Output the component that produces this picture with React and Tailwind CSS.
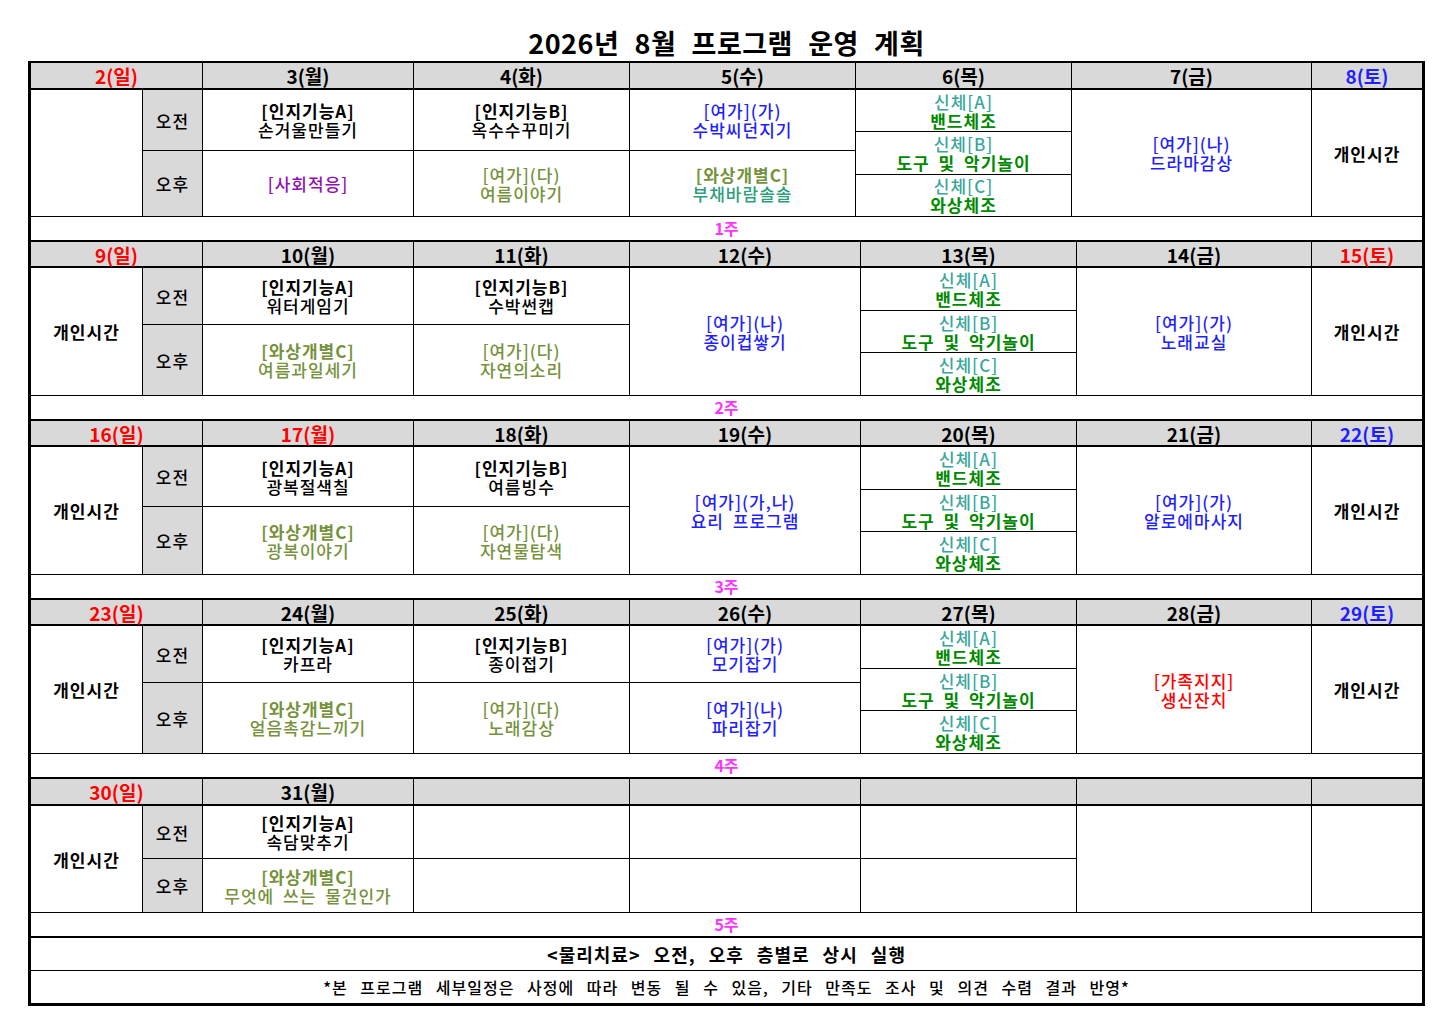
import React from 'react';

const K = 'text-black';
const BL = 'text-[#1f1fff]';
const OL = 'text-[#76923c]';
const TL = 'text-[#2e9e7c]';
const SC = 'text-[#3aa79c]';
const GR = 'text-[#008a00]';
const PU = 'text-[#9010b0]';
const RD = 'text-[#ff0000]';

// one program cell: lines = [text, colour, bold]
const Prog = ({ lines = [], span, last }) => (
  <div
    className={`flex flex-col items-center justify-center border-b border-black text-center ${last ? '' : 'border-r'} ${span ? 'row-span-2' : ''}`}
  >
    {lines.map(([t, c, b], i) => (
      <div key={i} className={`${c} ${b ? 'font-bold' : 'font-medium'}`}>{t}</div>
    ))}
  </div>
);

const Head = ({ t, c = K, wide, last }) => (
  <div
    className={`flex items-center justify-center border-b-2 border-black bg-[#d9d9d9] text-[19px] font-bold tracking-normal ${c} ${wide ? 'col-span-2' : ''} ${last ? '' : 'border-r'}`}
  >
    {t}
  </div>
);

const Slot = ({ t }) => (
  <div className="flex items-center justify-center border-r border-b border-black bg-[#d9d9d9] font-medium">{t}</div>
);

const Body = () => (
  <div className="row-span-2 flex flex-col border-r border-b border-black">
    {[['A', '밴드체조'], ['B', '도구 및 악기놀이'], ['C', '와상체조']].map(([k, v], i) => (
      <div key={k} className={`flex flex-1 flex-col items-center justify-center text-center ${i < 2 ? 'border-b border-black' : ''}`}>
        <div className={`${SC} font-medium`}>신체[{k}]</div>
        <div className={`${GR} font-bold`}>{v}</div>
      </div>
    ))}
  </div>
);

const Free = ({ last }) => <Prog span last={last} lines={[['개인시간', K, true]]} />;

const Week = ({ n, cols, rows, children }) => (
  <>
    <div className={`grid border-t-2 border-black ${cols} ${rows}`}>{children}</div>
    <div className="flex h-[23px] items-center justify-center text-[16px] font-bold tracking-normal text-[#ff33ff]">{n}주</div>
  </>
);

const A = (t) => [['[인지기능A]', K, true], [t, K]];
const B = (t) => [['[인지기능B]', K, true], [t, K]];
const C = (t) => [['[와상개별C]', OL, true], [t, OL]];
const D = (t) => [['[여가](다)', OL], [t, OL]];
const Y = (g, t) => [[`[여가](${g})`, BL], [t, BL]];

const COLS1 = 'grid-cols-[112px_60px_211px_216px_226px_216px_240px_110px]';
const COLS = 'grid-cols-[112px_60px_211px_216px_231px_216px_235px_110px]';

export default function App() {
  return (
    <div className="min-h-screen bg-white font-['Noto_Sans_CJK_KR',sans-serif] text-black">
      <h1 className="ml-[28px] w-[1397px] pt-[24px] text-center text-[27px] font-bold leading-[37px] tracking-[0.5px] whitespace-pre [word-spacing:1px]">
        2026년  8월  프로그램  운영  계획
      </h1>
      <div className="ml-[28px] w-[1397px] border-x-[3px] border-b-[3px] border-black text-[17px] leading-[19px] tracking-[1px] [word-spacing:4px]">
        <Week n={1} cols={COLS1} rows="grid-rows-[27px_61px_66px]">
          <Head t="2(일)" c={RD} wide />
          <Head t="3(월)" />
          <Head t="4(화)" />
          <Head t="5(수)" />
          <Head t="6(목)" />
          <Head t="7(금)" />
          <Head t="8(토)" c={BL} last />
          <Prog span />
          <Slot t="오전" />
          <Prog lines={A('손거울만들기')} />
          <Prog lines={B('옥수수꾸미기')} />
          <Prog lines={Y('가', '수박씨던지기')} />
          <Body />
          <Prog span lines={Y('나', '드라마감상')} />
          <Free last />
          <Slot t="오후" />
          <Prog lines={[['[사회적응]', PU]]} />
          <Prog lines={D('여름이야기')} />
          <Prog lines={[['[와상개별C]', OL, true], ['부채바람솔솔', TL]]} />
        </Week>

        <Week n={2} cols={COLS} rows="grid-rows-[26px_57px_71px]">
          <Head t="9(일)" c={RD} wide />
          <Head t="10(월)" />
          <Head t="11(화)" />
          <Head t="12(수)" />
          <Head t="13(목)" />
          <Head t="14(금)" />
          <Head t="15(토)" c={RD} last />
          <Free />
          <Slot t="오전" />
          <Prog lines={A('워터게임기')} />
          <Prog lines={B('수박썬캡')} />
          <Prog span lines={Y('나', '종이컵쌓기')} />
          <Body />
          <Prog span lines={Y('가', '노래교실')} />
          <Free last />
          <Slot t="오후" />
          <Prog lines={C('여름과일세기')} />
          <Prog lines={D('자연의소리')} />
        </Week>

        <Week n={3} cols={COLS} rows="grid-rows-[26px_60px_68px]">
          <Head t="16(일)" c={RD} wide />
          <Head t="17(월)" c={RD} />
          <Head t="18(화)" />
          <Head t="19(수)" />
          <Head t="20(목)" />
          <Head t="21(금)" />
          <Head t="22(토)" c={BL} last />
          <Free />
          <Slot t="오전" />
          <Prog lines={A('광복절색칠')} />
          <Prog lines={B('여름빙수')} />
          <Prog span lines={Y('가,나', '요리 프로그램')} />
          <Body />
          <Prog span lines={Y('가', '알로에마사지')} />
          <Free last />
          <Slot t="오후" />
          <Prog lines={C('광복이야기')} />
          <Prog lines={D('자연물탐색')} />
        </Week>

        <Week n={4} cols={COLS} rows="grid-rows-[26px_57px_71px]">
          <Head t="23(일)" c={RD} wide />
          <Head t="24(월)" />
          <Head t="25(화)" />
          <Head t="26(수)" />
          <Head t="27(목)" />
          <Head t="28(금)" />
          <Head t="29(토)" c={BL} last />
          <Free />
          <Slot t="오전" />
          <Prog lines={A('카프라')} />
          <Prog lines={B('종이접기')} />
          <Prog lines={Y('가', '모기잡기')} />
          <Body />
          <Prog span lines={[['[가족지지]', RD], ['생신잔치', RD]]} />
          <Free last />
          <Slot t="오후" />
          <Prog lines={C('얼음촉감느끼기')} />
          <Prog lines={D('노래감상')} />
          <Prog lines={Y('나', '파리잡기')} />
        </Week>

        <Week n={5} cols={COLS} rows="grid-rows-[27px_53px_54px]">
          <Head t="30(일)" c={RD} wide />
          <Head t="31(월)" />
          <Head t="" />
          <Head t="" />
          <Head t="" />
          <Head t="" />
          <Head t="" last />
          <Free />
          <Slot t="오전" />
          <Prog lines={A('속담맞추기')} />
          <Prog />
          <Prog />
          <Prog />
          <Prog span />
          <Prog span last />
          <Slot t="오후" />
          <Prog lines={C('무엇에 쓰는 물건인가')} />
          <Prog />
          <Prog />
          <Prog />
        </Week>

        <div className="flex h-[34px] items-center justify-center border-t-2 border-black text-[18px] font-bold [word-spacing:8px]">
          &lt;물리치료&gt; 오전, 오후 층별로 상시 실행
        </div>
        <div className="flex h-[33px] items-center justify-center border-t border-black text-[16px] font-medium [word-spacing:8px]">
          *본 프로그램 세부일정은 사정에 따라 변동 될 수 있음, 기타 만족도 조사 및 의견 수렴 결과 반영*
        </div>
      </div>
    </div>
  );
}
